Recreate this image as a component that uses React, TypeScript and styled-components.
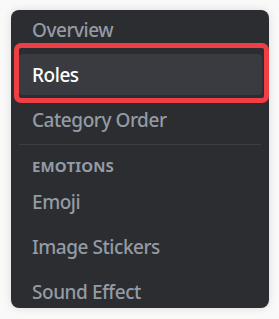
import styled, { createGlobalStyle } from "styled-components";

const GlobalStyle = createGlobalStyle`
  html, body {
    margin: 0;
    padding: 0;
    background: #f9f9f9;
  }
  body {
    font-family: "Noto Sans", "Open Sans", sans-serif;
  }
`;

type NavItem = { label: string; selected?: boolean };

const topItems: NavItem[] = [
  { label: "Overview" },
  { label: "Roles", selected: true },
  { label: "Category Order" },
];

const emotionItems: NavItem[] = [
  { label: "Emoji" },
  { label: "Image Stickers" },
  { label: "Sound Effect" },
];

const App = () => {
  return (
    <>
      <GlobalStyle />
      <Page>
        <Sidebar>
          {topItems.map((item) => (
            <Item key={item.label} $selected={item.selected}>
              {item.label}
              {item.selected && <Highlight />}
            </Item>
          ))}
          <Separator />
          <Header>Emotions</Header>
          {emotionItems.map((item) => (
            <Item key={item.label}>{item.label}</Item>
          ))}
        </Sidebar>
      </Page>
    </>
  );
};

const Page = styled.div`
  width: 279px;
  height: 319px;
  padding: 10px 10px 0 11px;
  box-sizing: border-box;
`;

const Sidebar = styled.nav`
  width: 258px;
  height: 298px;
  box-sizing: border-box;
  padding: 0 7px 0 8px;
  background: #2b2d31;
  border-radius: 8px;
  overflow: hidden;
  display: flex;
  flex-direction: column;
  gap: 4px;
  box-shadow: 0 0 8px rgba(0, 0, 0, 0.12);

  & > :first-child {
    margin-top: -1px;
  }
`;

const Item = styled.div<{ $selected?: boolean }>`
  position: relative;
  flex: none;
  height: 41px;
  display: flex;
  align-items: center;
  padding: 0 13px;
  border-radius: 4px;
  font-size: 19px;
  font-weight: 500;
  letter-spacing: -0.45px;
  color: ${(p) => (p.$selected ? "#ffffff" : "#949ba4")};
  background: ${(p) => (p.$selected ? "#393b40" : "transparent")};
  white-space: nowrap;
`;

const Highlight = styled.span`
  position: absolute;
  top: -11px;
  left: -5px;
  right: -7px;
  bottom: -8px;
  border: 5px solid #ef3f44;
  border-radius: 7px;
  pointer-events: none;
`;

const Separator = styled.div`
  flex: none;
  height: 1px;
  margin: 0 1px 0 0;
  background: #3c3e44;
`;

const Header = styled.div`
  flex: none;
  height: 22px;
  margin-top: 6px;
  display: flex;
  align-items: center;
  padding: 0 13px;
  font-size: 15px;
  font-weight: 700;
  text-transform: uppercase;
  color: #949ba4;
  letter-spacing: 0.01em;
`;

export default App;
